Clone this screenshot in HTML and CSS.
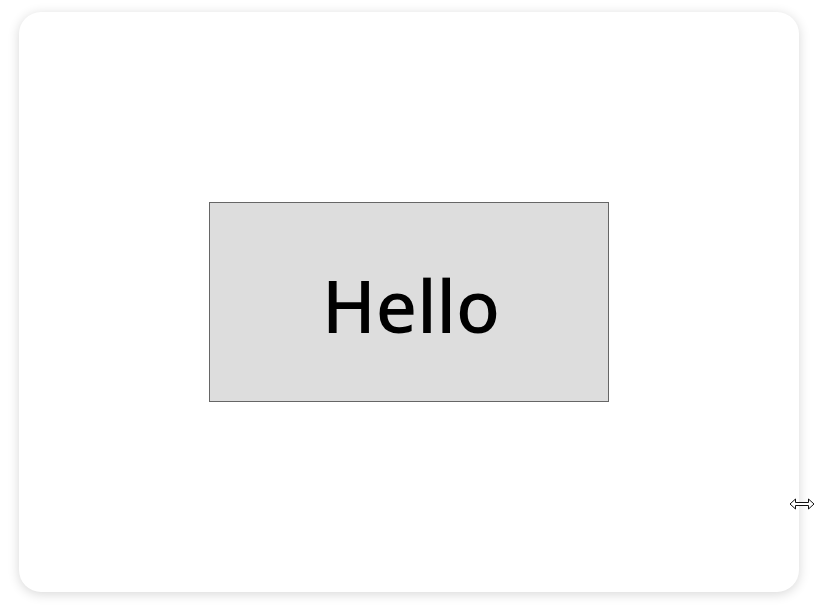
FILE: index.html
```html
<html><head>
<meta charset="UTF-8">
<meta name="viewport" content="width=device-width, initial-scale=1.0">
<title>Hello</title>
<link rel="stylesheet" href="styles.css">
</head>
<body>
  <div class="card">
    <div class="box">
      <span class="greeting">Hello</span>
    </div>
  </div>

  <!-- resize cursor over the card edge -->
  <svg class="cursor" width="26" height="14" viewBox="0 0 26 14">
    <path d="M1 7 L6.5 2 L6.5 5.5 L19.5 5.5 L19.5 2 L25 7 L19.5 12 L19.5 8.5 L6.5 8.5 L6.5 12 Z" fill="#fff" stroke="#111" stroke-width="1"/>
  </svg>
</body>
</html>
```

FILE: styles.css
```css
body {
  margin: 0;
  background-color: #ffffff;
  font-family: "Noto Sans", sans-serif;
}
.card {
  width: 780px;
  height: 580px;
  margin: 12px 0 0 19px;
  background-color: #ffffff;
  border-radius: 22px;
  box-shadow: 0 2px 12px rgba(0,0,0,0.16);
  display: flex;
  align-items: center;
  justify-content: center;
}
.box {
  width: 398px;
  height: 198px;
  background-color: #dddddd;
  border: 1px solid #666666;
  display: flex;
  align-items: center;
  justify-content: center;
}
.greeting {
  font-size: 72px;
  font-weight: 500;
  color: #000000;
  line-height: 1;
  padding: 6px 0 0 4px;
}
.cursor {
  position: absolute;
  left: 789px;
  top: 497px;
}
```
